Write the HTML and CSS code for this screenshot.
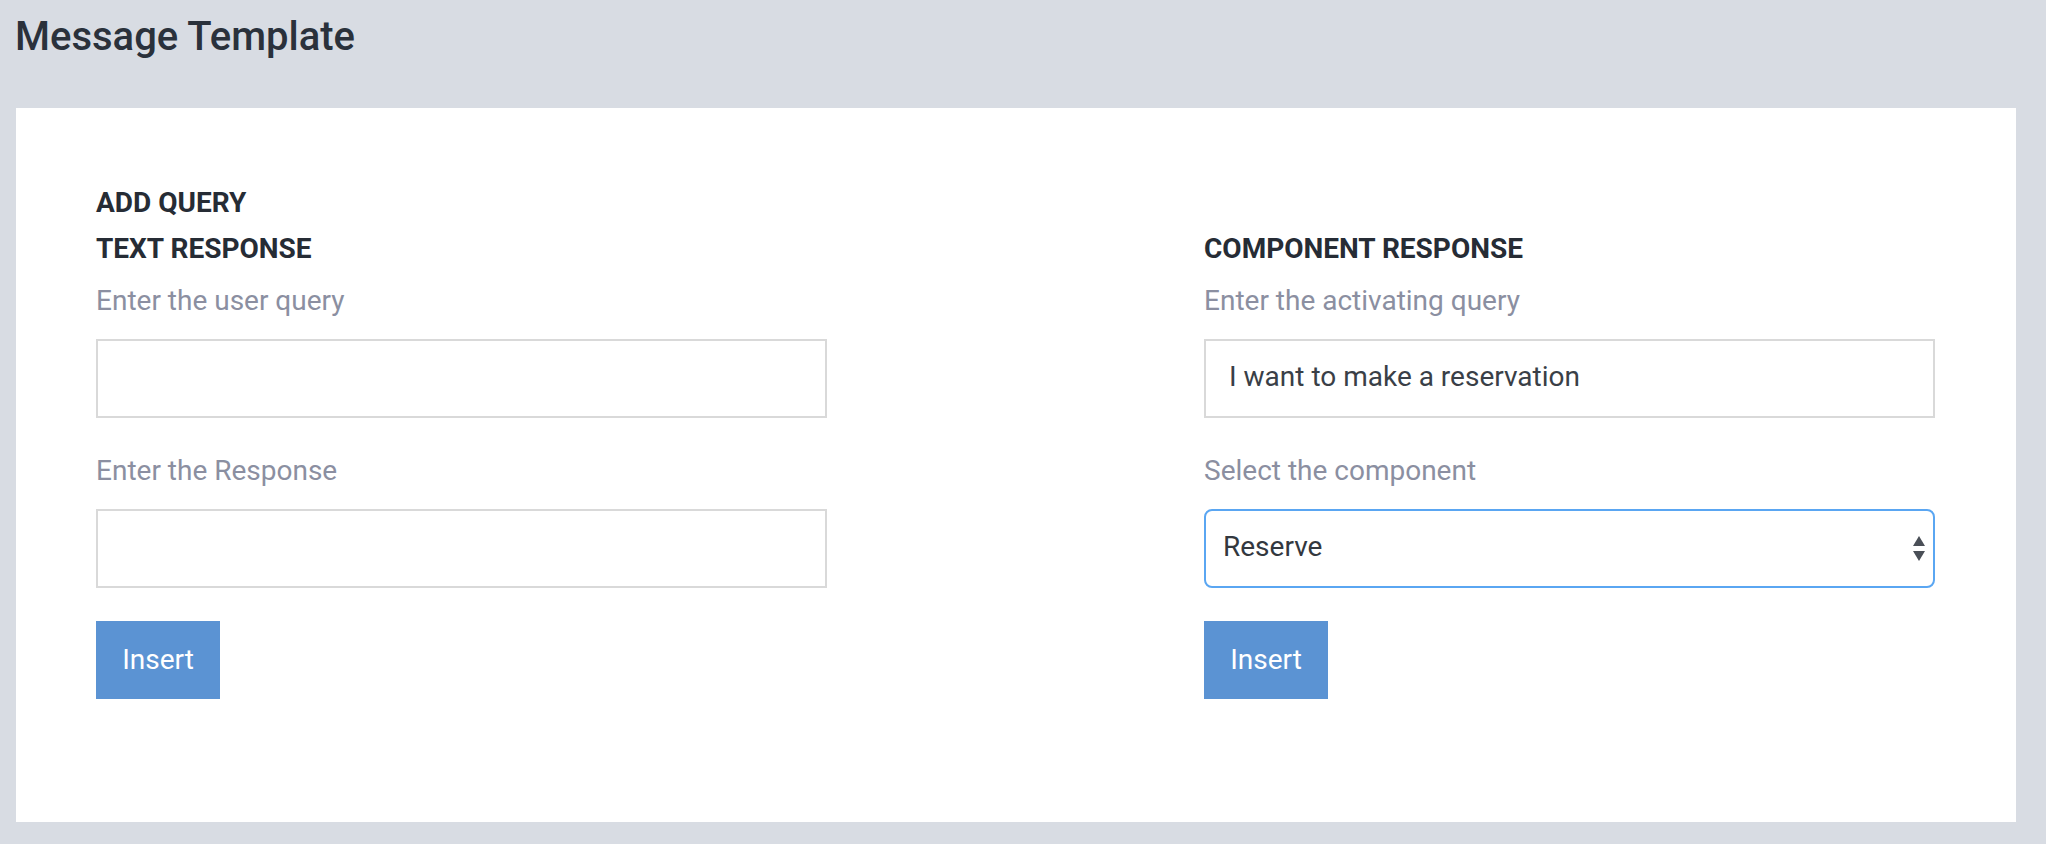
FILE: index.html
```html
<!DOCTYPE html>
<html lang="en">
<head>
    <meta charset="UTF-8">
    <meta name="viewport" content="width=device-width, initial-scale=1.0">
    <title>Message Template</title>
    <link rel="stylesheet" href="styles.css">
</head>
<body>
    <header class="page-header">
        <h1>Message Template</h1>
    </header>

    <div class="card">
        <h3 class="section-title">ADD QUERY</h3>

        <div class="columns">
            <form class="column">
                <h3 class="section-title">TEXT RESPONSE</h3>
                <div class="field">
                    <label for="user-query">Enter the user query</label>
                    <input type="text" id="user-query">
                </div>
                <div class="field">
                    <label for="response">Enter the Response</label>
                    <input type="text" id="response">
                </div>
                <button type="button" class="btn">Insert</button>
            </form>

            <form class="column">
                <h3 class="section-title">COMPONENT RESPONSE</h3>
                <div class="field">
                    <label for="activating-query">Enter the activating query</label>
                    <input type="text" id="activating-query" value="I want to make a reservation">
                </div>
                <div class="field">
                    <label for="component">Select the component</label>
                    <div class="select-wrap">
                        <select id="component">
                            <option>Reserve</option>
                        </select>
                        <span class="arrows">
                            <span class="up"></span>
                            <span class="down"></span>
                        </span>
                    </div>
                </div>
                <button type="button" class="btn">Insert</button>
            </form>
        </div>
    </div>
</body>
</html>
```

FILE: styles.css
```css
* {
    box-sizing: border-box;
}

body {
    margin: 0;
    background: #d8dce3;
    font-family: Roboto, "Liberation Sans", sans-serif;
    color: #2a313b;
}

.page-header {
    height: 108px;
    padding: 12px 15px 0;
}

.page-header h1 {
    margin: 0;
    font-size: 40px;
    line-height: 50px;
    font-weight: 500;
    color: #2a313b;
}

.card {
    margin: 0 30px 0 16px;
    height: 714px;
    padding: 77px 81px 0 80px;
    background: #ffffff;
}

.section-title {
    margin: 0;
    font-size: 28px;
    line-height: 36px;
    font-weight: 700;
    color: #262c35;
}

.columns {
    display: grid;
    grid-template-columns: 1fr 1fr;
    column-gap: 377px;
    margin-top: 10px;
}

.column {
    display: flex;
    flex-direction: column;
    align-items: flex-start;
}

.field {
    width: 100%;
    display: flex;
    flex-direction: column;
}

.section-title + .field {
    margin-top: 17px;
}

.field + .field {
    margin-top: 36px;
}

.field label {
    font-size: 28px;
    line-height: 34px;
    color: #8b8fa1;
    margin-bottom: 21px;
}

.field input {
    width: 100%;
    height: 79px;
    padding: 0 23px 4px;
    border: 2px solid #d9d9d9;
    border-radius: 0;
    font-family: inherit;
    font-size: 28px;
    color: #3a3f47;
    outline: none;
}

.select-wrap {
    position: relative;
    width: 100%;
}

.select-wrap select {
    width: 100%;
    height: 79px;
    padding: 0 60px 4px 17px;
    border: 2px solid #5aa6f2;
    border-radius: 8px;
    background: #ffffff;
    font-family: inherit;
    font-size: 28px;
    color: #33383f;
    appearance: none;
    -webkit-appearance: none;
    outline: none;
}

.arrows {
    position: absolute;
    right: 10px;
    top: 27px;
    display: flex;
    flex-direction: column;
    gap: 5px;
    pointer-events: none;
}

.arrows .up {
    width: 0;
    height: 0;
    border-left: 6px solid transparent;
    border-right: 6px solid transparent;
    border-bottom: 10px solid #4a4f57;
}

.arrows .down {
    width: 0;
    height: 0;
    border-left: 6px solid transparent;
    border-right: 6px solid transparent;
    border-top: 10px solid #4a4f57;
}

.btn {
    margin-top: 33px;
    width: 124px;
    height: 78px;
    padding: 0 0 2px;
    border: none;
    border-radius: 0;
    background: #5b93d3;
    color: #ffffff;
    font-family: inherit;
    font-size: 28px;
    font-weight: 400;
    cursor: pointer;
}
```
